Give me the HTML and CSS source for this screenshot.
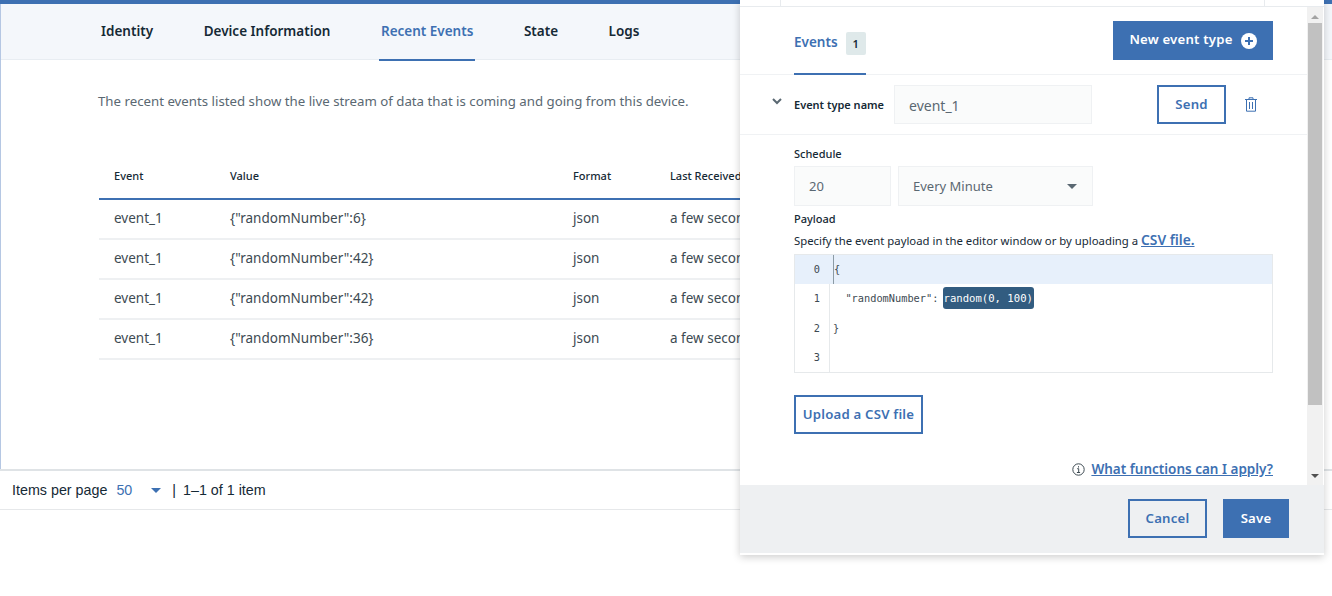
FILE: index.html
```html
<!DOCTYPE html>
<html lang="en">
<head>
  <meta charset="UTF-8">
  <meta name="viewport" content="width=device-width, initial-scale=1.0">
  <title>Recent Events</title>
  <link rel="stylesheet" href="styles.css">
</head>
<body>
  <div class="page">
    <div class="detail">
      <nav class="tabs">
        <a class="tab">Identity</a>
        <a class="tab">Device Information</a>
        <a class="tab tab-active">Recent Events</a>
        <a class="tab">State</a>
        <a class="tab">Logs</a>
      </nav>
      <p class="intro">The recent events listed show the live stream of data that is coming and going from this device.</p>
      <table class="events">
        <thead>
          <tr>
            <th class="col-event">Event</th>
            <th class="col-value">Value</th>
            <th class="col-format">Format</th>
            <th class="col-last">Last Received</th>
          </tr>
        </thead>
        <tbody>
          <tr><td>event_1</td><td>{"randomNumber":6}</td><td>json</td><td>a few seconds ago</td></tr>
          <tr><td>event_1</td><td>{"randomNumber":42}</td><td>json</td><td>a few seconds ago</td></tr>
          <tr><td>event_1</td><td>{"randomNumber":42}</td><td>json</td><td>a few seconds ago</td></tr>
          <tr><td>event_1</td><td>{"randomNumber":36}</td><td>json</td><td>a few seconds ago</td></tr>
        </tbody>
      </table>
    </div>
    <div class="pager">
      <span>Items per page</span>
      <span class="pager-size">50</span>
      <span class="caret caret-blue"></span>
      <span class="pager-sep">|</span>
      <span>1–1 of 1 item</span>
    </div>
  </div>

  <aside class="panel">
    <div class="panel-strip"><div class="panel-strip-cell"></div></div>
    <div class="panel-body">
      <div class="panel-scroll">
        <div class="panel-head">
          <div class="events-tab">
            <span class="events-tab-label">Events</span>
            <span class="badge">1</span>
          </div>
          <button class="btn btn-primary btn-new">
            New event type
            <svg class="plus" width="16" height="16" viewBox="0 0 16 16"><circle cx="8" cy="8" r="8" fill="#fff"/><path d="M8 4v8M4 8h8" stroke="#3d70b2" stroke-width="2"/></svg>
          </button>
        </div>

        <div class="event-row">
          <svg class="chevron" width="10" height="7" viewBox="0 0 10 7"><path d="M1 1l4 4 4-4" fill="none" stroke="#5a6872" stroke-width="2"/></svg>
          <label class="event-name-label">Event type name</label>
          <div class="field field-name">event_1</div>
          <button class="btn btn-outline btn-send">Send</button>
          <svg class="trash" width="12" height="15" viewBox="0 0 12 15"><path d="M0 2.5h12M4 2.5V.8h4v1.7M1.5 2.5v11.7h9V2.5M4.5 5v7M7.5 5v7" fill="none" stroke="#3d70b2" stroke-width="1"/></svg>
        </div>

        <div class="event-form">
          <label class="form-label">Schedule</label>
          <div class="schedule">
            <div class="field field-count">20</div>
            <div class="field field-unit">Every Minute<span class="caret caret-grey"></span></div>
          </div>
          <label class="form-label form-label-payload">Payload</label>
          <p class="help">Specify the event payload in the editor window or by uploading a <a class="help-link">CSV file.</a></p>
          <div class="editor">
            <div class="line line-active"><span class="gutter">0</span><span class="code code-cursor">{</span></div>
            <div class="line"><span class="gutter">1</span><span class="code">  "randomNumber": <span class="token">random(0, 100)</span></span></div>
            <div class="line"><span class="gutter">2</span><span class="code">}</span></div>
            <div class="line"><span class="gutter">3</span><span class="code"></span></div>
          </div>
          <button class="btn btn-outline btn-upload">Upload a CSV file</button>
          <div class="functions">
            <svg width="13" height="13" viewBox="0 0 13 13"><circle cx="6.5" cy="6.5" r="5.7" fill="none" stroke="#3d4a52" stroke-width="1"/><path d="M5.2 5.7h1.5v3.6M4.9 9.5h3.2M6.5 3.2v1.3" fill="none" stroke="#3d4a52" stroke-width="1"/></svg>
            <a class="functions-link">What functions can I apply?</a>
          </div>
        </div>
      </div>
      <div class="scrollbar">
        <span class="scroll-up"></span>
        <span class="scroll-thumb"></span>
        <span class="scroll-down"></span>
      </div>
    </div>
    <div class="panel-foot">
      <button class="btn btn-outline btn-cancel">Cancel</button>
      <button class="btn btn-primary btn-save">Save</button>
    </div>
  </aside>
</body>
</html>
```

FILE: styles.css
```css
html, body {
  margin: 0;
  height: 100%;
  overflow: hidden;
  background: #fff;
}
body {
  font-family: "Noto Sans", "Open Sans", sans-serif;
  color: #152935;
  position: relative;
}
button {
  font-family: inherit;
  cursor: pointer;
}

/* page behind the panel */
.page {
  border-top: 4px solid #3d70b2;
}
.detail {
  height: 465px;
  border-left: 1px solid #b5c7e3;
  box-sizing: border-box;
  overflow: hidden;
}
.tabs {
  display: flex;
  height: 56px;
  box-sizing: border-box;
  padding-left: 98px;
  gap: 46.5px;
  background: #f4f7fb;
  border-bottom: 1px solid #e8edf2;
}
.tab {
  font-size: 13.5px;
  font-weight: 600;
  line-height: 54px;
  height: 57px;
  box-sizing: border-box;
  padding: 0 2px;
}
.tab-active {
  color: #3d70b2;
  border-bottom: 2px solid #3d70b2;
}
.intro {
  margin: 31px 0 0 97px;
  font-size: 13.25px;
  line-height: 20px;
  color: #5a6872;
  white-space: nowrap;
}
.events {
  margin: 41px 0 0 98px;
  width: 1134px;
  border-collapse: collapse;
  table-layout: fixed;
  font-size: 13.5px;
}
.events th {
  height: 46px;
  padding: 0 0 0 15px;
  font-size: 11px;
  font-weight: 500;
  text-align: left;
  border-bottom: 2px solid #3d70b2;
}
.events td {
  height: 36px;
  padding: 0 0 2px 15px;
  color: #3d4a52;
  white-space: nowrap;
  border-bottom: 2px solid #eef0f2;
}
.events td + td,
.events th + th {
  padding-left: 0;
}
.col-event { width: 116px; }
.col-value { width: 343px; }
.col-format { width: 97px; }

.pager {
  display: flex;
  align-items: center;
  height: 41px;
  box-sizing: border-box;
  padding: 0 0 0 12px;
  border-top: 2px solid #dfe3e6;
  border-bottom: 1px solid #e6e8ea;
  font-family: "Liberation Sans", Arial, sans-serif;
  font-size: 14.3px;
}
.pager-size {
  margin-left: 9px;
  color: #3d70b2;
}
.pager-sep {
  margin: 0 7px 0 11px;
}
.caret {
  display: inline-block;
  width: 0;
  height: 0;
  border-left: 5px solid transparent;
  border-right: 5px solid transparent;
  border-top: 5px solid #5a6872;
}
.caret-blue {
  margin-left: 19px;
  border-top-color: #3d70b2;
}

/* side panel */
.panel {
  position: absolute;
  top: 0;
  left: 740px;
  width: 584px;
  height: 555px;
  display: flex;
  flex-direction: column;
  background: #fff;
  box-shadow: 0 2px 8px rgba(0, 0, 0, 0.2);
}
.panel-strip {
  height: 7px;
  flex: none;
  box-sizing: border-box;
  padding: 0 59px 0 40px;
  border-bottom: 1px solid #e8ebee;
}
.panel-strip-cell {
  height: 6px;
  border-left: 1px solid #e8ebee;
  border-right: 1px solid #e8ebee;
}
.panel-body {
  flex: 1;
  display: flex;
  min-height: 0;
}
.panel-scroll {
  flex: 1;
  min-width: 0;
  overflow: hidden;
}
.panel-head {
  display: flex;
  justify-content: space-between;
  height: 68px;
  box-sizing: border-box;
  padding: 14px 34px 0 54px;
  border-bottom: 1px solid #f0f2f4;
}
.events-tab {
  display: flex;
  align-items: flex-start;
  gap: 8px;
  width: 72px;
  height: 54px;
  box-sizing: border-box;
  padding-top: 11px;
  border-bottom: 2px solid #3d70b2;
}
.events-tab-label {
  font-size: 13.5px;
  font-weight: 600;
  line-height: 20px;
  color: #3d70b2;
}
.badge {
  width: 20px;
  height: 23px;
  background: #dfe9ea;
  border-radius: 2px;
  font-size: 11px;
  font-weight: 600;
  line-height: 23px;
  text-align: center;
}
.btn {
  box-sizing: border-box;
  font-size: 13.2px;
  font-weight: 600;
  padding: 0 0 1px;
  letter-spacing: 0.2px;
}
.btn-primary {
  background: #3d70b2;
  border: 0;
  color: #fff;
}
.btn-outline {
  background: transparent;
  border: 2px solid #3d70b2;
  color: #3d70b2;
}
.btn-new {
  display: flex;
  align-items: center;
  justify-content: center;
  gap: 8px;
  width: 160px;
  height: 39px;
  padding-bottom: 3px;
}
.plus {
  margin-top: 3px;
}
.event-row {
  display: flex;
  align-items: center;
  height: 60px;
  box-sizing: border-box;
  padding: 0 0 0 32px;
  border-bottom: 1px solid #f0f2f4;
}
.chevron {
  margin-bottom: 6px;
}
.event-name-label {
  margin-left: 12px;
  font-size: 11px;
  font-weight: 600;
  white-space: nowrap;
}
.field {
  box-sizing: border-box;
  background: #fafbfb;
  border: 1px solid #eff1f3;
  height: 40px;
  font-size: 13px;
  line-height: 38px;
  color: #5a6872;
}
.field-name {
  width: 198px;
  height: 39px;
  margin-left: 10px;
  padding-left: 14px;
  font-size: 14px;
  line-height: 39px;
}
.btn-send {
  width: 69px;
  height: 39px;
  margin-left: 65px;
}
.trash {
  margin-left: 19px;
}
.event-form {
  padding: 11px 34px 0 54px;
}
.form-label {
  display: block;
  font-size: 11px;
  font-weight: 500;
  line-height: 16px;
}
.schedule {
  display: flex;
  gap: 7px;
  margin-top: 4px;
}
.field-count {
  width: 97px;
  padding-left: 14px;
}
.field-unit {
  display: flex;
  align-items: center;
  justify-content: space-between;
  width: 195px;
  padding: 0 15px 0 14px;
}
.form-label-payload {
  margin-top: 5px;
}
.help {
  margin: 6px 0 0;
  font-size: 11.33px;
  line-height: 16px;
  white-space: nowrap;
}
.help-link {
  font-size: 13.8px;
  line-height: 1;
  font-weight: 600;
  color: #3d70b2;
  text-decoration: underline;
}
.editor {
  margin-top: 5px;
  border: 1px solid #e6e9eb;
  font-family: "DejaVu Sans Mono", monospace;
  font-size: 10.3px;
  color: #3d4a52;
}
.line {
  display: flex;
  align-items: center;
  height: 29.25px;
}
.line-active {
  background: #e7f0fb;
}
.gutter {
  flex: none;
  width: 35px;
  box-sizing: border-box;
  padding-right: 9px;
  text-align: right;
  align-self: stretch;
  line-height: 29.25px;
  background: #fff;
  border-right: 1px solid #e6e9eb;
}
.line-active .gutter {
  background: transparent;
  border-right-color: transparent;
}
.code {
  padding-left: 3px;
  white-space: pre;
  align-self: stretch;
  line-height: 29.25px;
}
.code-cursor {
  margin-left: 3px;
  padding-left: 0;
  border-left: 1px solid #8c9ba5;
}
.token {
  display: inline-block;
  margin-left: -2px;
  font-size: 10.6px;
  line-height: 22px;
  padding: 0 1px;
  background: #325c80;
  border-radius: 3px;
  color: #fff;
}
.btn-upload {
  display: block;
  width: 129px;
  height: 39px;
  margin-top: 22px;
}
.functions {
  display: flex;
  align-items: center;
  justify-content: flex-end;
  gap: 6px;
  margin-top: 26px;
}
.functions-link {
  font-size: 13.5px;
  font-weight: 600;
  color: #3d70b2;
  text-decoration: underline;
}
.scrollbar {
  flex: none;
  width: 16px;
  margin-right: 1px;
  display: flex;
  flex-direction: column;
  align-items: center;
  background: #f1f1f1;
}
.scroll-up,
.scroll-down {
  flex: none;
  width: 0;
  height: 0;
  border-left: 4px solid transparent;
  border-right: 4px solid transparent;
}
.scroll-up {
  margin-top: 8px;
  border-bottom: 4px solid #a3a3a3;
}
.scroll-thumb {
  flex: none;
  width: 14px;
  height: 382px;
  margin-top: 4px;
  background: #c1c1c1;
}
.scroll-down {
  margin-top: 69px;
  border-top: 4px solid #505050;
}
.panel-foot {
  flex: none;
  display: flex;
  justify-content: flex-end;
  gap: 16px;
  height: 70px;
  box-sizing: border-box;
  padding: 14px 35px 0 0;
  background: #eef0f2;
  border-bottom: 2px solid #fff;
}
.btn-cancel {
  width: 79px;
  height: 39px;
}
.btn-save {
  width: 66px;
  height: 39px;
}
```
